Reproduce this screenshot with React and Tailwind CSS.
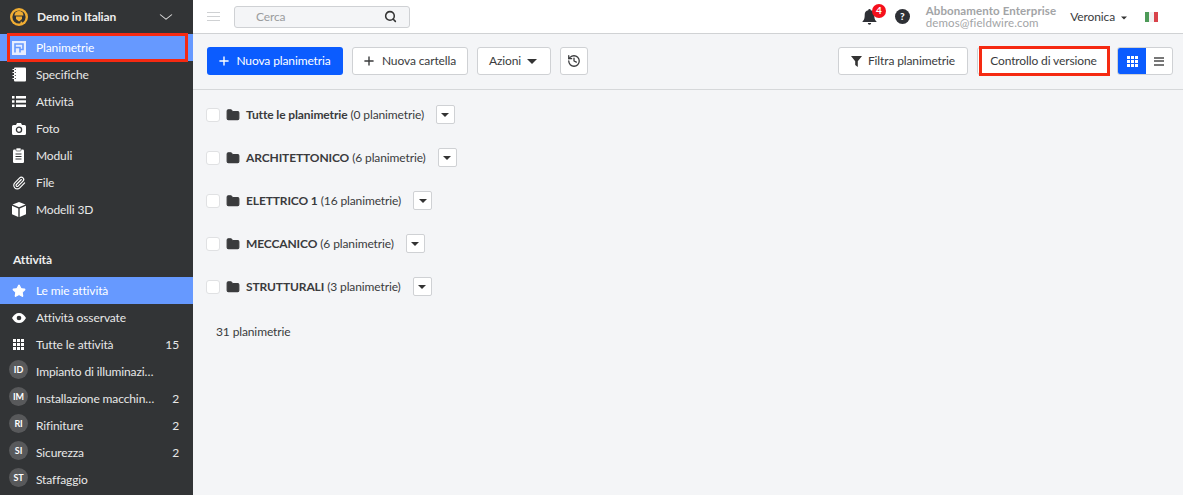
import { Plus, Search, History, ChevronDown, Star, Paperclip, Folder } from 'lucide-react'

const NAV = [
  { label: 'Planimetrie', icon: 'plan', active: true, outlined: true },
  { label: 'Specifiche', icon: 'book' },
  { label: 'Attività', icon: 'list' },
  { label: 'Foto', icon: 'camera' },
  { label: 'Moduli', icon: 'clip' },
  { label: 'File', icon: 'paper' },
  { label: 'Modelli 3D', icon: 'box' },
]

const TASKS = [
  { label: 'Le mie attività', icon: 'star', active: true },
  { label: 'Attività osservate', icon: 'eye' },
  { label: 'Tutte le attività', icon: 'grip', count: 15 },
  { label: 'Impianto di illuminazi…', badge: 'ID' },
  { label: 'Installazione macchin…', badge: 'IM', count: 2 },
  { label: 'Rifiniture', badge: 'RI', count: 2 },
  { label: 'Sicurezza', badge: 'SI', count: 2 },
  { label: 'Staffaggio', badge: 'ST' },
]

const FOLDERS = [
  { name: 'Tutte le planimetrie', count: '(0 planimetrie)' },
  { name: 'ARCHITETTONICO', count: '(6 planimetrie)' },
  { name: 'ELETTRICO 1', count: '(16 planimetrie)' },
  { name: 'MECCANICO', count: '(6 planimetrie)' },
  { name: 'STRUTTURALI', count: '(3 planimetrie)' },
]

function DotGrid({ size, rows, color, dot }) {
  const step = (size - dot) / (rows - 1)
  const cells = []
  for (let r = 0; r < rows; r++) {
    for (let c = 0; c < rows; c++) {
      cells.push(<rect key={`${r}-${c}`} x={c * step} y={r * step} width={dot} height={dot} fill={color} />)
    }
  }
  return <svg width={size} height={size} viewBox={`0 0 ${size} ${size}`}>{cells}</svg>
}

function NavIcon({ name }) {
  if (name === 'plan') {
    return (
      <svg width="14" height="14" viewBox="0 0 14 14" fill="none">
        <rect x="0" y="0" width="14" height="14" fill="#e6edff" />
        <path d="M3 11.500V3h8v5.500H8M3 6.500h5v5" stroke="#6699ff" strokeWidth="1.6" />
      </svg>
    )
  }
  if (name === 'book') {
    return (
      <svg width="14" height="15" viewBox="0 0 14 15" fill="#fff">
        <rect x="2" y="0.500" width="12" height="14" rx="1" />
        <path d="M0.500 2.500h3M0.500 5.500h3M0.500 8.500h3M0.500 11.500h3" stroke="#fff" strokeWidth="1.2" />
        <path d="M3.800 2.500h-1M3.800 5.500h-1M3.800 8.500h-1M3.800 11.500h-1" stroke="#323436" strokeWidth="1" />
      </svg>
    )
  }
  if (name === 'list') {
    return (
      <svg width="14" height="11" viewBox="0 0 14 11" fill="#fff">
        <path d="M0 0h2.500v2.500H0zM0 4.200h2.500v2.500H0zM0 8.500h2.500V11H0zM4 0h10v2.500H4zM4 4.200h10v2.500H4zM4 8.500h10V11H4z" />
      </svg>
    )
  }
  if (name === 'camera') {
    return (
      <svg width="14" height="12" viewBox="0 0 14 12">
        <path d="M1.500 2H4l1-2h4l1 2h2.500A1.500 1.500 0 0 1 14 3.500v7a1.500 1.500 0 0 1-1.500 1.500h-11A1.500 1.500 0 0 1 0 10.500v-7A1.500 1.500 0 0 1 1.500 2z" fill="#fff" />
        <circle cx="7" cy="6.800" r="2.600" fill="none" stroke="#323436" strokeWidth="1.300" />
      </svg>
    )
  }
  if (name === 'clip') {
    return (
      <svg width="11" height="15" viewBox="0 0 11 15">
        <rect x="0" y="1.500" width="11" height="13.500" rx="1.200" fill="#fff" />
        <rect x="3" y="0" width="5" height="3" rx="0.800" fill="#fff" stroke="#323436" strokeWidth="0.600" />
        <path d="M2.500 6h6M2.500 8.500h6M2.500 11h6" stroke="#323436" strokeWidth="1" />
      </svg>
    )
  }
  if (name === 'paper') return <Paperclip size={14} color="#fff" strokeWidth={2} />
  if (name === 'box') {
    return (
      <svg width="14" height="15" viewBox="0 0 14 15" fill="#fff">
        <path d="M7 0l6.500 2.600L7 5.200.500 2.600z" />
        <path d="M0 3.800l6.300 2.600V15L0 12.200zM14 3.800L7.700 6.400V15l6.300-2.800z" />
      </svg>
    )
  }
  if (name === 'star') return <Star size={14} color="#fff" fill="#fff" />
  if (name === 'eye') {
    return (
      <svg width="14" height="10" viewBox="0 0 14 10">
        <path d="M0 5c1.600-3 4-5 7-5s5.400 2 7 5c-1.600 3-4 5-7 5S1.600 8 0 5z" fill="#fff" />
        <circle cx="7" cy="5" r="2.300" fill="#323436" />
      </svg>
    )
  }
  if (name === 'grip') return <DotGrid size={11} rows={3} color="#fff" dot={3} />
  return null
}

function NavRow({ item }) {
  return (
    <div className={`relative flex h-[27px] shrink-0 items-center pr-[14px] text-[12px] ${item.active ? 'bg-[#6699ff] text-white' : 'text-[#e8e8e8]'}`}>
      <div className="flex w-[36px] shrink-0 justify-center pl-[1px]">
        {item.badge ? (
          <span className="flex h-[19px] w-[19px] -translate-y-[2px] items-center justify-center rounded-full bg-[#58595b] text-[9px] font-bold text-white">
            {item.badge}
          </span>
        ) : (
          <NavIcon name={item.icon} />
        )}
      </div>
      <span className="whitespace-nowrap">{item.label}</span>
      {item.count && <span className="ml-auto">{item.count}</span>}
      {item.outlined && <div className="absolute -top-[1px] left-[7px] h-[29px] w-[181px] border-[3px] border-[#f52a12]" />}
    </div>
  )
}

function Sidebar() {
  return (
    <aside className="flex h-[495px] w-[193px] shrink-0 flex-col overflow-hidden bg-[#323436]">
      <div className="flex h-[34px] shrink-0 items-center pl-[10px] pr-[18px]">
        <svg width="18" height="18" viewBox="0 0 18 18">
          <circle cx="9" cy="9" r="9" fill="#f0ad33" />
          <circle cx="9" cy="9" r="6.600" fill="#323436" />
          <path d="M4.500 7.500a4.500 4.500 0 0 1 9 0z" fill="#f0ad33" />
          <path d="M6 8.500h6v2.500l-3 2.500-3-2.500z" fill="#f0ad33" />
          <path d="M11 13l2 2.500-3 1z" fill="#f0ad33" />
        </svg>
        <span className="ml-[9px] text-[12px] font-bold text-[#eeeeee]">Demo in Italian</span>
        <ChevronDown size={18} color="#d8d8d8" strokeWidth={1.3} className="ml-auto scale-x-125" />
      </div>
      {NAV.map(item => <NavRow key={item.label} item={item} />)}
      <div className="mt-[22px] flex h-[32px] shrink-0 items-center pb-[2px] pl-[13px] text-[12px] font-bold text-[#eeeeee]">Attività</div>
      {TASKS.map(item => <NavRow key={item.label} item={item} />)}
    </aside>
  )
}

function Button({ children, className = '' }) {
  return (
    <button className={`flex h-[28px] items-center justify-center rounded-[3px] border border-[#cfd1d4] bg-white text-[12px] text-[#3a3b3d] ${className}`}>
      {children}
    </button>
  )
}

function Caret({ className = '' }) {
  return <span className={`inline-block h-0 w-0 border-x-[4px] border-t-[4px] border-x-transparent border-t-[#333] ${className}`} />
}

function Bars({ color, width, gap, thick }) {
  return (
    <span className="flex flex-col" style={{ gap }}>
      {[0, 1, 2].map(i => <span key={i} style={{ width, height: thick, background: color }} />)}
    </span>
  )
}

function TopBar() {
  return (
    <header className="flex h-[34px] shrink-0 items-center border-b border-[#d0d2d4] bg-white pl-[14px] pr-[25px]">
      <Bars color="#cfd1d3" width={13} gap={3} thick={1} />
      <div className="ml-[14px] flex h-[22px] w-[176px] items-center rounded-[3px] border border-[#cfd1d4] bg-[#f4f5f7] pl-[21px] pr-[12px] text-[12px] text-[#9a9c9e]">
        Cerca
        <Search size={13} color="#333" strokeWidth={2.8} className="ml-auto" />
      </div>
      <div className="relative ml-auto">
        <svg width="15" height="16" viewBox="0 0 15 16" fill="#2e3035">
          <path d="M7.500 0a1.200 1.200 0 0 1 1.200 1.300A4.600 4.600 0 0 1 12.300 6c0 4 .9 5.200 2.200 6.500V13H.5v-.5C1.800 11.200 2.700 10 2.700 6a4.600 4.600 0 0 1 3.600-4.700A1.200 1.200 0 0 1 7.500 0z" />
          <path d="M5.800 14h3.400a1.700 1.700 0 0 1-3.400 0z" />
        </svg>
        <span className="absolute -right-[9px] -top-[5px] flex h-[14px] w-[14px] items-center justify-center rounded-full bg-[#f5101c] text-[10px] font-bold text-white">4</span>
      </div>
      <span className="ml-[18px] flex h-[15px] w-[15px] items-center justify-center rounded-full bg-[#2e3035] text-[10px] font-black text-white">?</span>
      <div className="ml-[16px] text-[11.5px] leading-[12px] text-[#a2a4a6]">
        <div className="font-bold tracking-[0.1px]">Abbonamento Enterprise</div>
        <div className="tracking-[0.1px]">demos@fieldwire.com</div>
      </div>
      <span className="ml-[14px] text-[12px] text-[#3a3b3d]">Veronica</span>
      <Caret className="ml-[5px] translate-y-[1px] scale-75" />
      <div className="ml-[17px] flex h-[10px] w-[13px]">
        <span className="flex-1 bg-[#4d9a58]" />
        <span className="flex-1 bg-[#f1f1f1]" />
        <span className="flex-1 bg-[#d8434a]" />
      </div>
    </header>
  )
}

function Toolbar() {
  return (
    <div className="flex h-[56px] shrink-0 items-center border-b border-[#d6d8da] pb-[1px] pl-[14px] pr-[10px]">
      <button className="flex h-[28px] w-[136px] items-center justify-center gap-[5px] rounded-[3px] bg-[#0b5cff] pr-[2px] text-[12px] text-white">
        <Plus size={14} strokeWidth={2.4} />
        Nuova planimetria
      </button>
      <Button className="ml-[9px] w-[116px] gap-[6px] pr-[2px]">
        <Plus size={14} strokeWidth={2.4} />
        Nuova cartella
      </Button>
      <Button className="ml-[9px] w-[74px] gap-[6px] pr-[2px]">
        Azioni
        <Caret className="border-x-[5px] border-t-[5px]" />
      </Button>
      <Button className="ml-[9px] w-[28px]">
        <History size={14} strokeWidth={2.2} />
      </Button>
      <Button className="ml-auto w-[130px] gap-[6px]">
        <svg width="11" height="11" viewBox="0 0 11 11" fill="#333">
          <path d="M0 0h11L6.800 5.200V11L4.200 9V5.200z" />
        </svg>
        Filtra planimetrie
      </Button>
      <div className="relative ml-[9px] h-[28px] w-[133px]">
        <Button className="h-full w-full">Controllo di versione</Button>
        <div className="absolute -top-[1px] left-[2px] right-0 h-[30px] border-[3px] border-[#f52a12]" />
      </div>
      <div className="ml-[7px] flex h-[28px] w-[56px] overflow-hidden rounded-[3px] border border-[#cfd1d4] bg-white">
        <span className="flex w-[28px] items-center justify-center bg-[#0b5cff]">
          <DotGrid size={11} rows={3} color="#fff" dot={3} />
        </span>
        <span className="flex flex-1 items-center justify-center">
          <Bars color="#777" width={10} gap={1.5} thick={2} />
        </span>
      </div>
    </div>
  )
}

function FolderRow({ folder }) {
  return (
    <div className="flex h-[43px] items-center text-[12px] text-[#3a3b3d]">
      <span className="h-[14px] w-[14px] rounded-[3px] border border-[#e0e1e3] bg-white" />
      <Folder size={14} color="#3a3b3d" fill="#3a3b3d" className="ml-[6px]" />
      <span className="ml-[6px] font-bold">{folder.name}</span>
      <span className="ml-[3px]">{folder.count}</span>
      <span className="ml-[12px] flex h-[19px] w-[19px] items-center justify-center rounded-[2px] border border-[#cfd1d4] bg-white">
        <Caret className="border-x-[4px] border-t-[4px]" />
      </span>
    </div>
  )
}

export default function App() {
  return (
    <div className="flex h-[495px] w-[1183px] overflow-hidden bg-[#f4f5f7] font-['Lato',sans-serif] tracking-[-0.12px]">
      <Sidebar />
      <main className="flex min-w-0 flex-1 flex-col">
        <TopBar />
        <Toolbar />
        <div className="pl-[13px] pt-[3px]">
          {FOLDERS.map(folder => <FolderRow key={folder.name} folder={folder} />)}
          <p className="mt-[15px] pl-[10px] text-[12px] text-[#3a3b3d]">31 planimetrie</p>
        </div>
      </main>
    </div>
  )
}
